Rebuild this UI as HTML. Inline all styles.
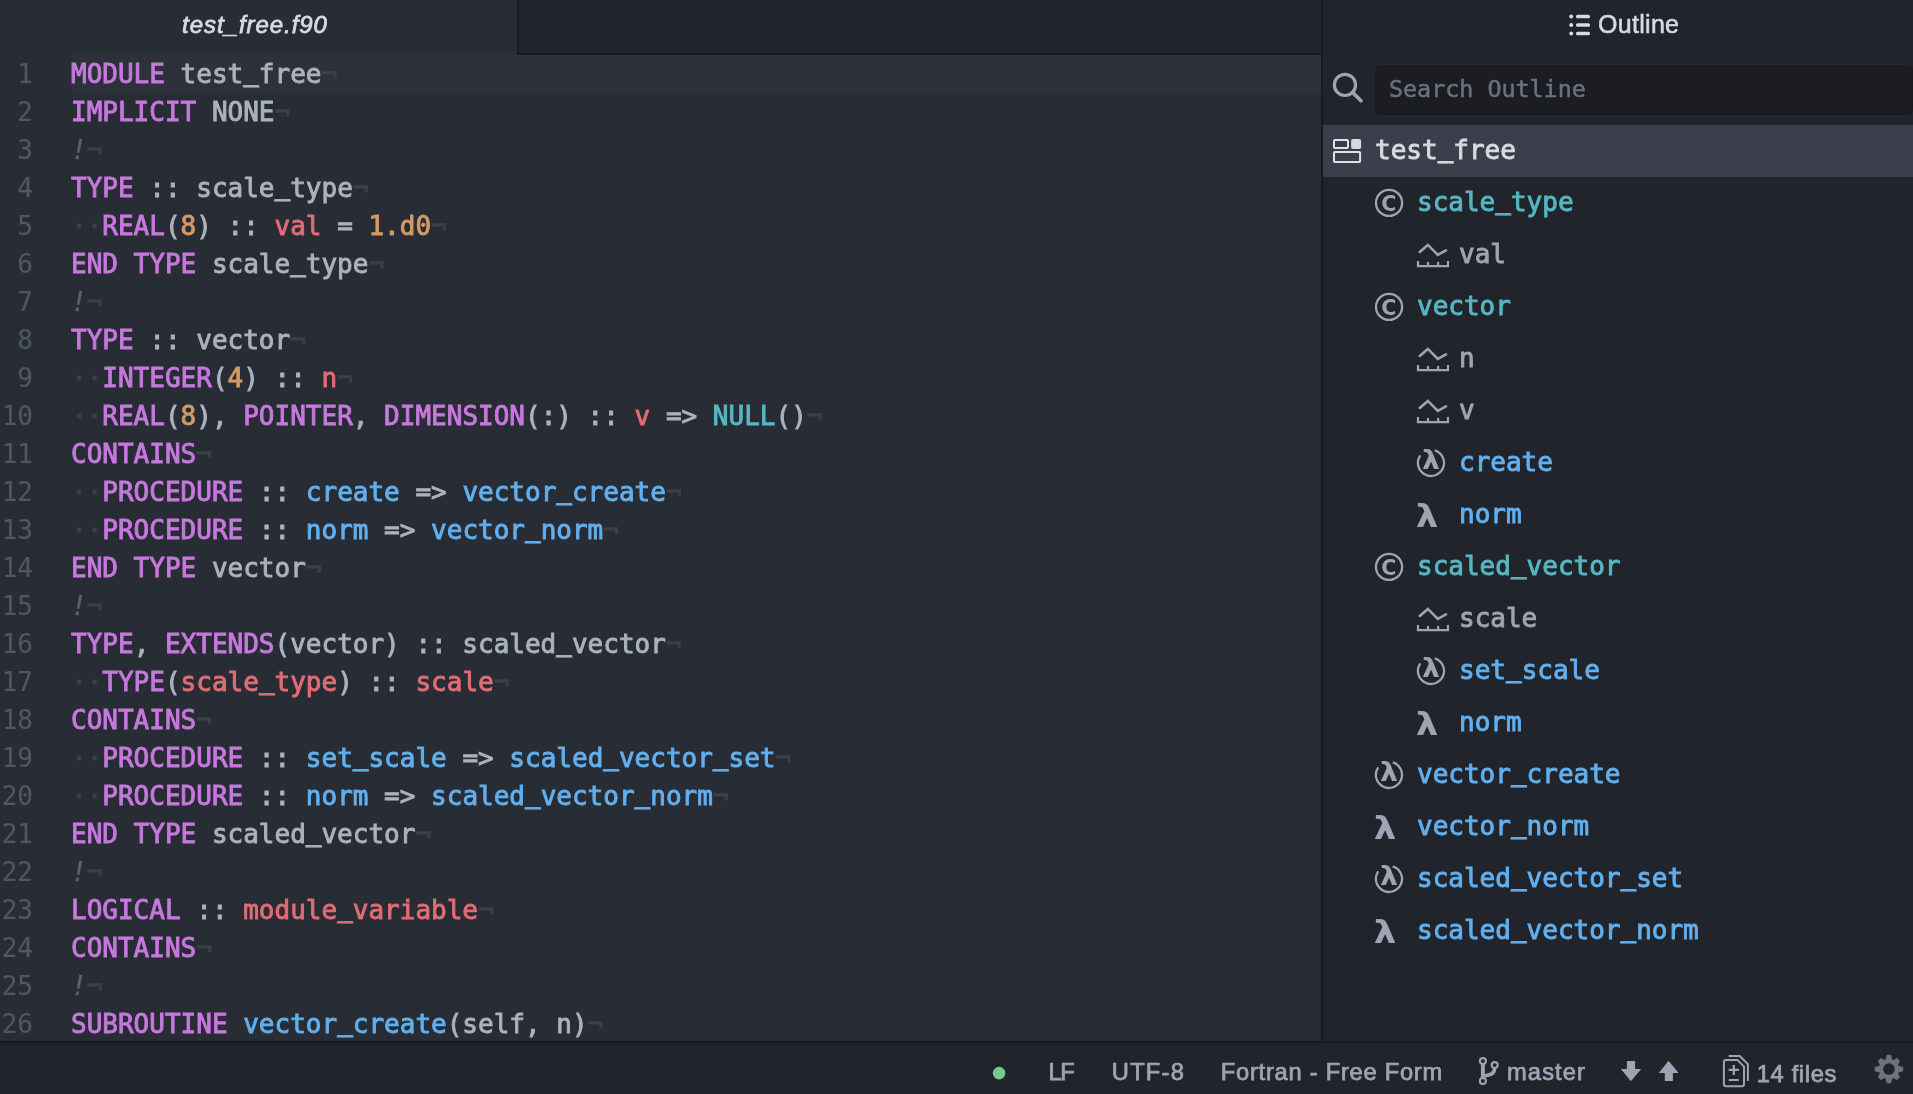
<!DOCTYPE html>
<html><head><meta charset="utf-8"><title>test_free.f90</title>
<style>
html,body{margin:0;padding:0;}
body{width:1913px;height:1094px;overflow:hidden;background:#282c34;position:relative;font-family:"Liberation Sans",sans-serif;}
.abs{position:absolute;}
#status,#outline,#tabtitle,#editor{will-change:transform;}
#tabbar{left:0;top:0;width:1321px;height:53px;background:#21252b;border-bottom:2px solid #181a1f;}
#tab{left:0;top:0;width:517px;height:55px;background:#282c34;border-right:2px solid #181a1f;}
#tabtitle{left:0;top:0;width:510px;height:50px;line-height:50px;text-align:center;color:#d7dae0;font-style:italic;font-size:24px;letter-spacing:0.95px;-webkit-text-stroke:0.8px #d7dae0;}
#editor{-webkit-text-stroke:0.9px;left:0;top:55px;width:1321px;height:986px;overflow:hidden;background:#282c34;font-family:"DejaVu Sans Mono","Liberation Mono",monospace;font-size:26px;}
.ln{height:38px;line-height:38px;white-space:pre;position:relative;}
.ln .g{position:absolute;left:0;top:0;width:33px;text-align:right;color:#4f5666;-webkit-text-stroke:0.15px;}
.ln .tx{position:absolute;left:71px;top:0;right:0;height:38px;color:#abb2bf;}
.ln.cur .tx{background:#2c313a;}
.u{position:relative;top:-2px;text-shadow:0 -1px 0 currentColor;}
.k{color:#c678dd}.t{color:#abb2bf}.n{color:#d19a66}.v{color:#e06c75}.f{color:#61afef}.c{color:#56b6c2}.m{color:#5c6370;font-style:italic;-webkit-text-stroke:0.3px}.i{color:#3b4048}
#divider{left:1321px;top:0;width:2px;height:1041px;background:#181a1f;}
#outline{left:1323px;top:0;width:590px;height:1041px;background:#21252b;overflow:hidden;}
#otitle{left:275px;top:0;height:49px;line-height:49px;color:#d7dae0;font-size:25px;letter-spacing:0.3px;-webkit-text-stroke:0.55px;}
#search{left:52px;top:65px;width:536px;height:48px;border:1px solid #181a1f;border-radius:6px;background:#1b1d23;}
#search span{position:absolute;left:13px;top:0;line-height:46px;font-family:"DejaVu Sans Mono",monospace;font-size:23.35px;color:#6b727f;-webkit-text-stroke:0.5px;}
.row{-webkit-text-stroke:0.9px;position:absolute;left:0;width:590px;height:52px;font-family:"DejaVu Sans Mono","Liberation Mono",monospace;font-size:26px;}
.row.sel{background:#3a3f4b;}
.row .nm{position:absolute;top:0;line-height:50px;}
.row .ic{position:absolute;top:11px;overflow:visible;}
.row .ic text{-webkit-text-stroke:0;}
.w{color:#d7dae0}.cy{color:#56b6c2}.gr{color:#9da5b4}.bl{color:#61afef}
#status{left:0;top:1041px;width:1913px;height:51px;border-top:2px solid #181a1f;background:#21252b;color:#9da5b4;font-size:23.7px;-webkit-text-stroke:0.75px;}
#status span{position:absolute;top:0;line-height:58px;white-space:nowrap;}
</style></head><body>
<div id="tabbar" class="abs"></div>
<div id="tab" class="abs"></div>
<div id="tabtitle" class="abs">test_free.f90</div>
<div id="editor" class="abs">
<div class="ln cur"><span class="g">1</span><span class="tx"><span class="k">MODULE</span><span class="t"> test<span class="u">_</span>free</span><span class="i">¬</span></span></div>
<div class="ln"><span class="g">2</span><span class="tx"><span class="k">IMPLICIT</span><span class="t"> NONE</span><span class="i">¬</span></span></div>
<div class="ln"><span class="g">3</span><span class="tx"><span class="m">!</span><span class="i">¬</span></span></div>
<div class="ln"><span class="g">4</span><span class="tx"><span class="k">TYPE</span><span class="t"> :: scale<span class="u">_</span>type</span><span class="i">¬</span></span></div>
<div class="ln"><span class="g">5</span><span class="tx"><span class="i">··</span><span class="k">REAL</span><span class="t">(</span><span class="n">8</span><span class="t">) :: </span><span class="v">val</span><span class="t"> = </span><span class="n">1.d0</span><span class="i">¬</span></span></div>
<div class="ln"><span class="g">6</span><span class="tx"><span class="k">END TYPE</span><span class="t"> scale<span class="u">_</span>type</span><span class="i">¬</span></span></div>
<div class="ln"><span class="g">7</span><span class="tx"><span class="m">!</span><span class="i">¬</span></span></div>
<div class="ln"><span class="g">8</span><span class="tx"><span class="k">TYPE</span><span class="t"> :: vector</span><span class="i">¬</span></span></div>
<div class="ln"><span class="g">9</span><span class="tx"><span class="i">··</span><span class="k">INTEGER</span><span class="t">(</span><span class="n">4</span><span class="t">) :: </span><span class="v">n</span><span class="i">¬</span></span></div>
<div class="ln"><span class="g">10</span><span class="tx"><span class="i">··</span><span class="k">REAL</span><span class="t">(</span><span class="n">8</span><span class="t">), </span><span class="k">POINTER</span><span class="t">, </span><span class="k">DIMENSION</span><span class="t">(:) :: </span><span class="v">v</span><span class="t"> =&gt; </span><span class="c">NULL</span><span class="t">()</span><span class="i">¬</span></span></div>
<div class="ln"><span class="g">11</span><span class="tx"><span class="k">CONTAINS</span><span class="i">¬</span></span></div>
<div class="ln"><span class="g">12</span><span class="tx"><span class="i">··</span><span class="k">PROCEDURE</span><span class="t"> :: </span><span class="f">create</span><span class="t"> =&gt; </span><span class="f">vector<span class="u">_</span>create</span><span class="i">¬</span></span></div>
<div class="ln"><span class="g">13</span><span class="tx"><span class="i">··</span><span class="k">PROCEDURE</span><span class="t"> :: </span><span class="f">norm</span><span class="t"> =&gt; </span><span class="f">vector<span class="u">_</span>norm</span><span class="i">¬</span></span></div>
<div class="ln"><span class="g">14</span><span class="tx"><span class="k">END TYPE</span><span class="t"> vector</span><span class="i">¬</span></span></div>
<div class="ln"><span class="g">15</span><span class="tx"><span class="m">!</span><span class="i">¬</span></span></div>
<div class="ln"><span class="g">16</span><span class="tx"><span class="k">TYPE</span><span class="t">, </span><span class="k">EXTENDS</span><span class="t">(vector) :: scaled<span class="u">_</span>vector</span><span class="i">¬</span></span></div>
<div class="ln"><span class="g">17</span><span class="tx"><span class="i">··</span><span class="k">TYPE</span><span class="t">(</span><span class="v">scale<span class="u">_</span>type</span><span class="t">) :: </span><span class="v">scale</span><span class="i">¬</span></span></div>
<div class="ln"><span class="g">18</span><span class="tx"><span class="k">CONTAINS</span><span class="i">¬</span></span></div>
<div class="ln"><span class="g">19</span><span class="tx"><span class="i">··</span><span class="k">PROCEDURE</span><span class="t"> :: </span><span class="f">set<span class="u">_</span>scale</span><span class="t"> =&gt; </span><span class="f">scaled<span class="u">_</span>vector<span class="u">_</span>set</span><span class="i">¬</span></span></div>
<div class="ln"><span class="g">20</span><span class="tx"><span class="i">··</span><span class="k">PROCEDURE</span><span class="t"> :: </span><span class="f">norm</span><span class="t"> =&gt; </span><span class="f">scaled<span class="u">_</span>vector<span class="u">_</span>norm</span><span class="i">¬</span></span></div>
<div class="ln"><span class="g">21</span><span class="tx"><span class="k">END TYPE</span><span class="t"> scaled<span class="u">_</span>vector</span><span class="i">¬</span></span></div>
<div class="ln"><span class="g">22</span><span class="tx"><span class="m">!</span><span class="i">¬</span></span></div>
<div class="ln"><span class="g">23</span><span class="tx"><span class="k">LOGICAL</span><span class="t"> :: </span><span class="v">module<span class="u">_</span>variable</span><span class="i">¬</span></span></div>
<div class="ln"><span class="g">24</span><span class="tx"><span class="k">CONTAINS</span><span class="i">¬</span></span></div>
<div class="ln"><span class="g">25</span><span class="tx"><span class="m">!</span><span class="i">¬</span></span></div>
<div class="ln"><span class="g">26</span><span class="tx"><span class="k">SUBROUTINE</span><span class="t"> </span><span class="f">vector<span class="u">_</span>create</span><span class="t">(self, n)</span><span class="i">¬</span></span></div>
</div>
<div id="divider" class="abs"></div>
<div id="outline" class="abs">
<svg class="abs" style="left:245px;top:13px" width="24" height="24" viewBox="0 0 24 24"><g fill="#d7dae0"><circle cx="3.2" cy="3.5" r="2"/><circle cx="3.2" cy="12" r="2"/><circle cx="3.2" cy="20.5" r="2"/><rect x="8" y="1.8" width="14" height="3.4" rx="1.5"/><rect x="8" y="10.3" width="14" height="3.4" rx="1.5"/><rect x="8" y="18.8" width="14" height="3.4" rx="1.5"/></g></svg>
<div id="otitle" class="abs">Outline</div>
<svg class="abs" style="left:0;top:60px" width="50" height="60" viewBox="0 60 50 60"><circle cx="21.97" cy="84.9" r="10.6" fill="none" stroke="#9da5b4" stroke-width="3.2"/><path d="M29.6 92.5L38 100.8" stroke="#9da5b4" stroke-width="3.7" stroke-linecap="round"/></svg>
<div id="search" class="abs"><span>Search Outline</span></div>
<div class="row sel" style="top:125px"><svg class="ic" style="left:10px;top:14px" width="30" height="26" viewBox="0 0 30 26"><rect x="1" y="1" width="14" height="8" rx="1" fill="none" stroke="#dfe2e8" stroke-width="2"/><rect x="18.1" y="0" width="10" height="10" rx="2" fill="#d7dae0"/><rect x="1" y="12.9" width="26.1" height="10.1" rx="1" fill="none" stroke="#dfe2e8" stroke-width="2"/></svg><span class="nm w" style="left:52px">test<span class="u">_</span>free</span></div>
<div class="row" style="top:177px"><svg class="ic" style="left:52px" width="30" height="30" viewBox="0 0 30 30"><circle cx="14.05" cy="14.9" r="13.05" fill="none" stroke="#9da5b4" stroke-width="2.3"/><text x="6.25" y="22.5" font-family="DejaVu Sans, sans-serif" font-weight="bold" font-size="20.6" fill="#9da5b4">C</text></svg><span class="nm cy" style="left:94px">scale<span class="u">_</span>type</span></div>
<div class="row" style="top:229px"><svg class="ic" style="left:94px" width="34" height="30" viewBox="0 0 34 30"><path d="M2.7 11.9L10.9 4.9L20.8 14.8L29 10.3" fill="none" stroke="#9da5b4" stroke-width="2.6" stroke-linecap="round"/><path d="M1 21V26.1H31V21M11 22V26.1M21.1 22V26.1" fill="none" stroke="#9da5b4" stroke-width="2.2"/></svg><span class="nm gr" style="left:136px">val</span></div>
<div class="row" style="top:281px"><svg class="ic" style="left:52px" width="30" height="30" viewBox="0 0 30 30"><circle cx="14.05" cy="14.9" r="13.05" fill="none" stroke="#9da5b4" stroke-width="2.3"/><text x="6.25" y="22.5" font-family="DejaVu Sans, sans-serif" font-weight="bold" font-size="20.6" fill="#9da5b4">C</text></svg><span class="nm cy" style="left:94px">vector</span></div>
<div class="row" style="top:333px"><svg class="ic" style="left:94px" width="34" height="30" viewBox="0 0 34 30"><path d="M2.7 11.9L10.9 4.9L20.8 14.8L29 10.3" fill="none" stroke="#9da5b4" stroke-width="2.6" stroke-linecap="round"/><path d="M1 21V26.1H31V21M11 22V26.1M21.1 22V26.1" fill="none" stroke="#9da5b4" stroke-width="2.2"/></svg><span class="nm gr" style="left:136px">n</span></div>
<div class="row" style="top:385px"><svg class="ic" style="left:94px" width="34" height="30" viewBox="0 0 34 30"><path d="M2.7 11.9L10.9 4.9L20.8 14.8L29 10.3" fill="none" stroke="#9da5b4" stroke-width="2.6" stroke-linecap="round"/><path d="M1 21V26.1H31V21M11 22V26.1M21.1 22V26.1" fill="none" stroke="#9da5b4" stroke-width="2.2"/></svg><span class="nm gr" style="left:136px">v</span></div>
<div class="row" style="top:437px"><svg class="ic" style="left:94px" width="30" height="30" viewBox="0 0 30 30"><path d="M17.77 2.42A13.05 13.05 0 1 1 3.26 7.41" fill="none" stroke="#9da5b4" stroke-width="2.3"/><text transform="translate(5.05,20.9) scale(1.08,1)" font-family="DejaVu Sans, sans-serif" font-weight="bold" font-size="26.2" fill="#9da5b4">λ</text></svg><span class="nm bl" style="left:136px">create</span></div>
<div class="row" style="top:489px"><svg class="ic" style="left:94px" width="30" height="30" viewBox="0 0 30 30"><text transform="translate(-1.27,27) scale(1.127,1)" font-family="DejaVu Sans, sans-serif" font-weight="bold" font-size="31.6" fill="#9da5b4">λ</text></svg><span class="nm bl" style="left:136px">norm</span></div>
<div class="row" style="top:541px"><svg class="ic" style="left:52px" width="30" height="30" viewBox="0 0 30 30"><circle cx="14.05" cy="14.9" r="13.05" fill="none" stroke="#9da5b4" stroke-width="2.3"/><text x="6.25" y="22.5" font-family="DejaVu Sans, sans-serif" font-weight="bold" font-size="20.6" fill="#9da5b4">C</text></svg><span class="nm cy" style="left:94px">scaled<span class="u">_</span>vector</span></div>
<div class="row" style="top:593px"><svg class="ic" style="left:94px" width="34" height="30" viewBox="0 0 34 30"><path d="M2.7 11.9L10.9 4.9L20.8 14.8L29 10.3" fill="none" stroke="#9da5b4" stroke-width="2.6" stroke-linecap="round"/><path d="M1 21V26.1H31V21M11 22V26.1M21.1 22V26.1" fill="none" stroke="#9da5b4" stroke-width="2.2"/></svg><span class="nm gr" style="left:136px">scale</span></div>
<div class="row" style="top:645px"><svg class="ic" style="left:94px" width="30" height="30" viewBox="0 0 30 30"><path d="M17.77 2.42A13.05 13.05 0 1 1 3.26 7.41" fill="none" stroke="#9da5b4" stroke-width="2.3"/><text transform="translate(5.05,20.9) scale(1.08,1)" font-family="DejaVu Sans, sans-serif" font-weight="bold" font-size="26.2" fill="#9da5b4">λ</text></svg><span class="nm bl" style="left:136px">set<span class="u">_</span>scale</span></div>
<div class="row" style="top:697px"><svg class="ic" style="left:94px" width="30" height="30" viewBox="0 0 30 30"><text transform="translate(-1.27,27) scale(1.127,1)" font-family="DejaVu Sans, sans-serif" font-weight="bold" font-size="31.6" fill="#9da5b4">λ</text></svg><span class="nm bl" style="left:136px">norm</span></div>
<div class="row" style="top:749px"><svg class="ic" style="left:52px" width="30" height="30" viewBox="0 0 30 30"><path d="M17.77 2.42A13.05 13.05 0 1 1 3.26 7.41" fill="none" stroke="#9da5b4" stroke-width="2.3"/><text transform="translate(5.05,20.9) scale(1.08,1)" font-family="DejaVu Sans, sans-serif" font-weight="bold" font-size="26.2" fill="#9da5b4">λ</text></svg><span class="nm bl" style="left:94px">vector<span class="u">_</span>create</span></div>
<div class="row" style="top:801px"><svg class="ic" style="left:52px" width="30" height="30" viewBox="0 0 30 30"><text transform="translate(-1.27,27) scale(1.127,1)" font-family="DejaVu Sans, sans-serif" font-weight="bold" font-size="31.6" fill="#9da5b4">λ</text></svg><span class="nm bl" style="left:94px">vector<span class="u">_</span>norm</span></div>
<div class="row" style="top:853px"><svg class="ic" style="left:52px" width="30" height="30" viewBox="0 0 30 30"><path d="M17.77 2.42A13.05 13.05 0 1 1 3.26 7.41" fill="none" stroke="#9da5b4" stroke-width="2.3"/><text transform="translate(5.05,20.9) scale(1.08,1)" font-family="DejaVu Sans, sans-serif" font-weight="bold" font-size="26.2" fill="#9da5b4">λ</text></svg><span class="nm bl" style="left:94px">scaled<span class="u">_</span>vector<span class="u">_</span>set</span></div>
<div class="row" style="top:905px"><svg class="ic" style="left:52px" width="30" height="30" viewBox="0 0 30 30"><text transform="translate(-1.27,27) scale(1.127,1)" font-family="DejaVu Sans, sans-serif" font-weight="bold" font-size="31.6" fill="#9da5b4">λ</text></svg><span class="nm bl" style="left:94px">scaled<span class="u">_</span>vector<span class="u">_</span>norm</span></div>
</div>
<div id="status" class="abs">
<span style="left:1048.5px;letter-spacing:-1.3px">LF</span>
<span style="left:1111.8px;letter-spacing:1.25px">UTF-8</span>
<span style="left:1220.8px;letter-spacing:0.75px">Fortran - Free Form</span>
<span style="left:1507px;letter-spacing:1.12px">master</span>
<span style="left:1756.8px;top:1.7px;letter-spacing:0.64px">14 files</span>
</div>
<svg class="abs" style="left:0;top:1043px" width="1913" height="51" viewBox="0 1043 1913 51">
<circle cx="999.1" cy="1073.1" r="6.3" fill="#73c990"/>
<g fill="none" stroke="#9da5b4">
<circle cx="1482.9" cy="1061.1" r="3" stroke-width="2.1"/>
<circle cx="1494.7" cy="1065.1" r="3" stroke-width="2.1"/>
<circle cx="1482.9" cy="1081" r="3" stroke-width="2.1"/>
<path d="M1482.9 1064.5V1077.6" stroke-width="4"/>
<path d="M1494.5 1068.5C1494.5 1074.5 1489 1075.2 1484 1076" stroke-width="3.6"/>
<path d="M1737.3 1059.9H1725.9a2 2 0 0 0 -2 2V1084.2a2 2 0 0 0 2 2H1742a2 2 0 0 0 2 -2V1066.6Z" stroke-width="2" stroke-linejoin="round"/>
<path d="M1728.7 1056H1739.7L1747.9 1064.1V1081" stroke-width="2"/>
<path d="M1728.7 1069.9H1738.9M1733.8 1064.9V1075M1728.7 1080H1738.9" stroke-width="2.2"/>
</g>
<g fill="#9da5b4">
<path d="M1626.9 1061H1635.1V1068.9H1641.2L1630.9 1081.2L1620.9 1068.9H1626.9Z"/>
<path d="M1668.6 1060.8L1678.6 1073.1H1672.9V1081H1664.8V1073.1H1658.7Z"/>
</g>
<path fill="#6b7280" fill-rule="evenodd" d="M1885.55 1059.64L1886.85 1054.84 L1891.05 1054.84 L1892.35 1059.64A10.0 10.0 0 0 1 1893.20 1059.99L1897.01 1058.01 L1899.98 1060.98 L1898.00 1064.79A10.0 10.0 0 0 1 1898.35 1065.64L1903.15 1066.94 L1903.15 1071.14 L1898.35 1072.44A10.0 10.0 0 0 1 1898.00 1073.29L1899.98 1077.10 L1897.01 1080.07 L1893.20 1078.09A10.0 10.0 0 0 1 1892.35 1078.44L1891.05 1083.24 L1886.85 1083.24 L1885.55 1078.44A10.0 10.0 0 0 1 1884.70 1078.09L1880.89 1080.07 L1877.92 1077.10 L1879.90 1073.29A10.0 10.0 0 0 1 1879.55 1072.44L1874.75 1071.14 L1874.75 1066.94 L1879.55 1065.64A10.0 10.0 0 0 1 1879.90 1064.79L1877.92 1060.98 L1880.89 1058.01 L1884.70 1059.99A10.0 10.0 0 0 1 1885.55 1059.64ZM1883.15 1069.04a5.8 5.8 0 1 0 11.60 0a5.8 5.8 0 1 0 -11.60 0Z"/>
</svg>
</body></html>
